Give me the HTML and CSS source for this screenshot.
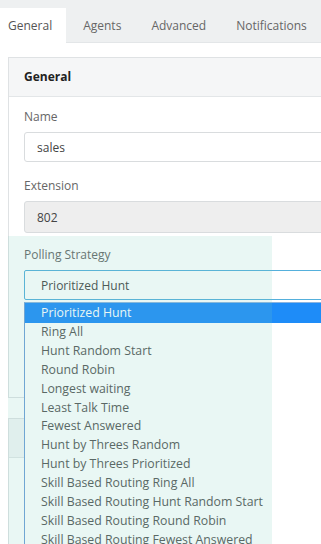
FILE: index.html
```html
<!DOCTYPE html>
<html lang="en">
<head>
  <meta charset="UTF-8">
  <title>Ring Group</title>
  <link rel="stylesheet" href="styles.css">
</head>
<body>
  <div class="page">
    <nav class="tabs">
      <span class="tab active">General</span>
      <span class="tab">Agents</span>
      <span class="tab">Advanced</span>
      <span class="tab">Notifications</span>
    </nav>

    <div class="content">
      <section class="panel">
        <div class="panel-heading">General</div>
        <div class="panel-body">
          <div class="form-group">
            <label>Name</label>
            <div class="input">sales</div>
          </div>
          <div class="form-group">
            <label>Extension</label>
            <div class="input disabled">802</div>
          </div>
          <div class="form-group polling">
            <label>Polling Strategy</label>
            <div class="input select">Prioritized Hunt</div>
            <ul class="dropdown">
              <li class="selected">Prioritized Hunt</li>
              <li>Ring All</li>
              <li>Hunt Random Start</li>
              <li>Round Robin</li>
              <li>Longest waiting</li>
              <li>Least Talk Time</li>
              <li>Fewest Answered</li>
              <li>Hunt by Threes Random</li>
              <li>Hunt by Threes Prioritized</li>
              <li>Skill Based Routing Ring All</li>
              <li>Skill Based Routing Hunt Random Start</li>
              <li>Skill Based Routing Round Robin</li>
              <li>Skill Based Routing Fewest Answered</li>
            </ul>
          </div>
        </div>
      </section>

      <!-- second panel, hidden under the open dropdown -->
      <section class="panel tall">
        <div class="panel-heading"></div>
        <div class="panel-body"></div>
      </section>
    </div>
    <div class="highlight"></div>
  </div>
</body>
</html>
```

FILE: styles.css
```css
body {
  margin: 0;
  font-family: 'Open Sans', 'Noto Sans', sans-serif;
  font-size: 12px;
  color: #555;
  overflow: hidden;
  background: #fff;
}
.page {
  position: relative;
  width: 420px;
  height: 544px;
  overflow: hidden;
}
.tabs {
  display: flex;
  height: 43px;
  padding-top: 8px;
  box-sizing: border-box;
  background: #eef0f1;
  border-bottom: 1px solid #e3e6e8;
}
.tab {
  display: flex;
  align-items: center;
  padding: 0 15px;
  color: #666;
  white-space: nowrap;
}
.tab.active {
  padding: 0 14px 0 8px;
  margin-right: 2px;
  background: #fff;
  color: #555;
  margin-bottom: -1px;
}
.content {
  padding: 14px 0 0 8px;
}
.panel {
  border: 1px solid #dfe2e4;
  margin-bottom: 20px;
}
.panel-heading {
  height: 38px;
  line-height: 38px;
  padding: 0 15px;
  background: #f5f6f7;
  border-bottom: 1px solid #e3e6e8;
  font-weight: 700;
  color: #222;
}
.panel-body {
  padding: 12px 0 0 15px;
  min-height: 60px;
}
.panel.tall .panel-body {
  min-height: 200px;
}
.form-group {
  margin-bottom: 16px;
}
.form-group label {
  display: block;
  line-height: 16px;
  margin-bottom: 7px;
  color: #666;
}
.input {
  height: 30px;
  line-height: 30px;
  padding: 0 12px;
  border: 1px solid #d9dcde;
  border-radius: 3px;
  box-sizing: border-box;
  color: #444;
}
.input.disabled {
  height: 32px;
  line-height: 32px;
  background: #eeeeee;
}
.polling {
  position: relative;
  margin-top: -13px;
  padding-top: 11px;
  height: 134px;
}
.input.select {
  border: 1px solid #55b0dc;
  border-radius: 2px;
  padding-left: 16px;
}
.dropdown {
  position: absolute;
  top: 66px;
  left: 0;
  width: 400px;
  margin: 0;
  padding: 0;
  list-style: none;
  background: #fff;
  border-left: 1px solid #6f9fd8;
  border-top: 1px solid #8ab4e0;
  z-index: 2;
}
.dropdown li {
  height: 18.9px;
  line-height: 18.9px;
  padding-left: 16px;
  font-size: 12.3px;
  color: #555;
  white-space: nowrap;
}
.dropdown li.selected {
  height: 20px;
  line-height: 20px;
  background: #1e8cf8;
  color: #fff;
}
.highlight {
  position: absolute;
  left: 8px;
  top: 236px;
  width: 264px;
  height: 308px;
  background: rgba(120, 205, 185, 0.16);
  z-index: 3;
  pointer-events: none;
}
```
